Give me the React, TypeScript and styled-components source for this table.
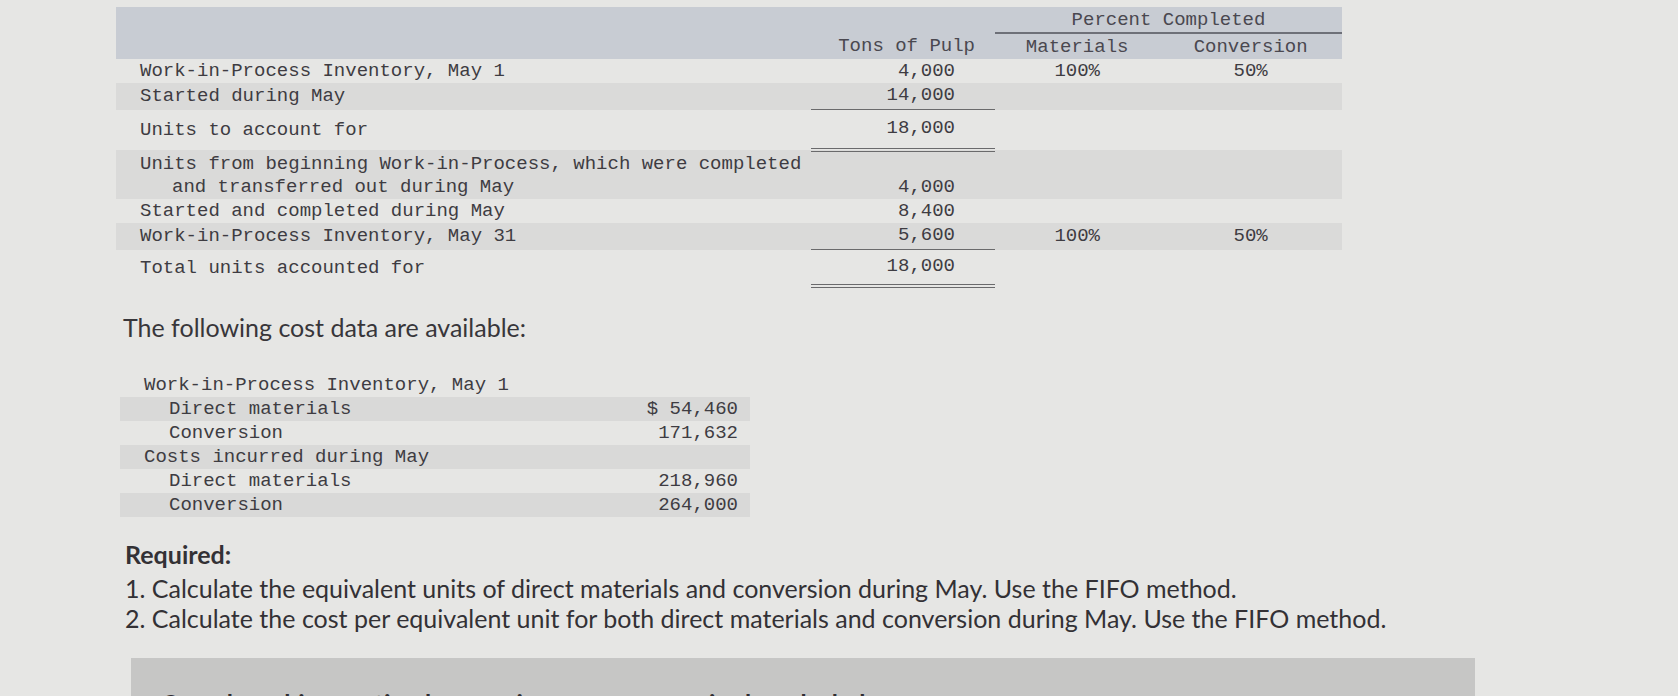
import styled, { createGlobalStyle } from 'styled-components';

const GlobalStyle = createGlobalStyle`
  html, body {
    margin: 0;
    overflow: hidden;
    background: #e6e6e4;
  }
`;

type Rule = 'single' | 'double' | undefined;

type UnitRow = {
  label: string[];
  tons: string;
  mat?: string;
  conv?: string;
  rule?: Rule;
  pt: number;
  pb: number;
};

const unitRows: UnitRow[] = [
  { label: ['Work-in-Process Inventory, May 1'], tons: '4,000', mat: '100%', conv: '50%', pt: 0, pb: 0 },
  { label: ['Started during May'], tons: '14,000', rule: 'single', pt: 0, pb: 2 },
  { label: ['Units to account for'], tons: '18,000', rule: 'double', pt: 6, pb: 8 },
  {
    label: ['Units from beginning Work-in-Process, which were completed', 'and transferred out during May'],
    tons: '4,000',
    pt: 3,
    pb: 0,
  },
  { label: ['Started and completed during May'], tons: '8,400', pt: 0, pb: 0 },
  { label: ['Work-in-Process Inventory, May 31'], tons: '5,600', mat: '100%', conv: '50%', rule: 'single', pt: 0, pb: 2 },
  { label: ['Total units accounted for'], tons: '18,000', rule: 'double', pt: 4, pb: 6 },
];

const costRows = [
  { label: 'Work-in-Process Inventory, May 1', value: '', indent: false },
  { label: 'Direct materials', value: '$ 54,460', indent: true },
  { label: 'Conversion', value: '171,632', indent: true },
  { label: 'Costs incurred during May', value: '', indent: false },
  { label: 'Direct materials', value: '218,960', indent: true },
  { label: 'Conversion', value: '264,000', indent: true },
];

export default function App() {
  return (
    <Page>
      <GlobalStyle />
      <UnitsTable>
        <thead>
          <HeadRow>
            <HeadCell />
            <HeadCell />
            <GroupHead colSpan={2}>Percent Completed</GroupHead>
          </HeadRow>
          <HeadRow>
            <HeadCell />
            <HeadCell $align="right">Tons of Pulp</HeadCell>
            <HeadCell $align="center">Materials</HeadCell>
            <HeadCell $align="center">Conversion</HeadCell>
          </HeadRow>
        </thead>
        <tbody>
          {unitRows.map((row, i) => (
            <BodyRow key={i} $shade={i % 2 === 1} $pt={row.pt} $pb={row.pb}>
              <LabelCell>
                {row.label.map((line, j) => (
                  <LabelLine key={j} $indent={j > 0}>
                    {line}
                  </LabelLine>
                ))}
              </LabelCell>
              <TonsCell $rule={row.rule}>{row.tons}</TonsCell>
              <PctCell>{row.mat}</PctCell>
              <PctCell>{row.conv}</PctCell>
            </BodyRow>
          ))}
        </tbody>
      </UnitsTable>

      <Lead>The following cost data are available:</Lead>

      <CostTable>
        <tbody>
          {costRows.map((row, i) => (
            <CostRow key={i} $shade={i % 2 === 1}>
              <CostLabel $indent={row.indent}>{row.label}</CostLabel>
              <CostValue>{row.value}</CostValue>
            </CostRow>
          ))}
        </tbody>
      </CostTable>

      <Required>
        <RequiredTitle>Required:</RequiredTitle>
        <RequiredLine>1. Calculate the equivalent units of direct materials and conversion during May. Use the FIFO method.</RequiredLine>
        <RequiredLine>2. Calculate the cost per equivalent unit for both direct materials and conversion during May. Use the FIFO method.</RequiredLine>
      </Required>

      <AnswerBox>
        <AnswerHint>Complete this question by entering your answers in the tabs below.</AnswerHint>
      </AnswerBox>
    </Page>
  );
}

const Page = styled.div`
  padding: 7px 0 0 116px;
  color: #3d3b40;
`;

const UnitsTable = styled.table`
  border-collapse: collapse;
  width: 1226px;
  font-family: 'Liberation Mono', 'DejaVu Sans Mono', monospace;
  font-size: 19px;
  color: #3e3c42;
`;

const HeadRow = styled.tr`
  background: #c8ccd3;
  height: 26px;
`;

const HeadCell = styled.th<{ $align?: 'left' | 'right' | 'center' }>`
  font-weight: normal;
  padding: 0 20px 0 0;
  line-height: 24px;
  text-align: ${(p) => p.$align || 'left'};
  color: #4a4850;

  &:first-child {
    width: 675px;
  }
  &:nth-child(2) {
    width: 164px;
  }
  &:nth-child(3),
  &:nth-child(4) {
    padding: 0;
  }
`;

const GroupHead = styled.th`
  font-weight: normal;
  text-align: center;
  line-height: 24px;
  padding: 0;
  border-bottom: 2px solid #6e7078;
  color: #4a4850;
`;

const BodyRow = styled.tr<{ $shade: boolean; $pt: number; $pb: number }>`
  background: ${(p) => (p.$shade ? '#dadad9' : 'transparent')};

  td {
    padding-top: ${(p) => p.$pt}px;
    padding-bottom: ${(p) => p.$pb}px;
  }
`;

const LabelCell = styled.td`
  padding-left: 24px !important;
  line-height: 23px;
  white-space: nowrap;
  vertical-align: bottom;
`;

const LabelLine = styled.div<{ $indent: boolean }>`
  padding-left: ${(p) => (p.$indent ? '32px' : '0')};
`;

const TonsCell = styled.td<{ $rule: Rule }>`
  text-align: right;
  padding-right: 40px;
  line-height: 24px;
  vertical-align: bottom;
  border-bottom: ${(p) =>
    p.$rule === 'double' ? '4px double #6a6a6c' : p.$rule === 'single' ? '1px solid #6a6a6c' : 'none'};
`;

const PctCell = styled.td`
  text-align: center;
  line-height: 24px;
  vertical-align: bottom;
`;

const Lead = styled.p`
  margin: 23px 0 0 7px;
  font-family: Lato, 'Open Sans', sans-serif;
  font-size: 25px;
  line-height: 32px;
  color: #38363a;
`;

const CostTable = styled.table`
  border-collapse: collapse;
  width: 630px;
  margin: 30px 0 0 4px;
  font-family: 'Liberation Mono', 'DejaVu Sans Mono', monospace;
  font-size: 19px;
  color: #3e3c42;
`;

const CostRow = styled.tr<{ $shade: boolean }>`
  background: ${(p) => (p.$shade ? '#d9d9d8' : 'transparent')};
  height: 24px;
`;

const CostLabel = styled.td<{ $indent: boolean }>`
  padding: 0 0 0 ${(p) => (p.$indent ? '49px' : '24px')};
  line-height: 24px;
  white-space: nowrap;
`;

const CostValue = styled.td`
  padding: 0 12px 0 0;
  text-align: right;
  line-height: 24px;
  white-space: pre;
`;

const Required = styled.div`
  margin: 22px 0 0 9px;
  font-family: Lato, 'Open Sans', sans-serif;
  font-size: 25px;
  color: #333135;
`;

const RequiredTitle = styled.div`
  font-weight: bold;
  line-height: 30px;
  margin-bottom: 4px;
`;

const RequiredLine = styled.div`
  line-height: 30px;
`;

const AnswerBox = styled.div`
  margin: 25px 0 0 15px;
  width: 1344px;
  height: 120px;
  background: #c6c6c5;
  padding: 30px 0 0 30px;
  box-sizing: border-box;
`;

const AnswerHint = styled.div`
  font-family: Lato, 'Open Sans', sans-serif;
  font-weight: bold;
  font-size: 25px;
  color: #2f2d31;
`;
